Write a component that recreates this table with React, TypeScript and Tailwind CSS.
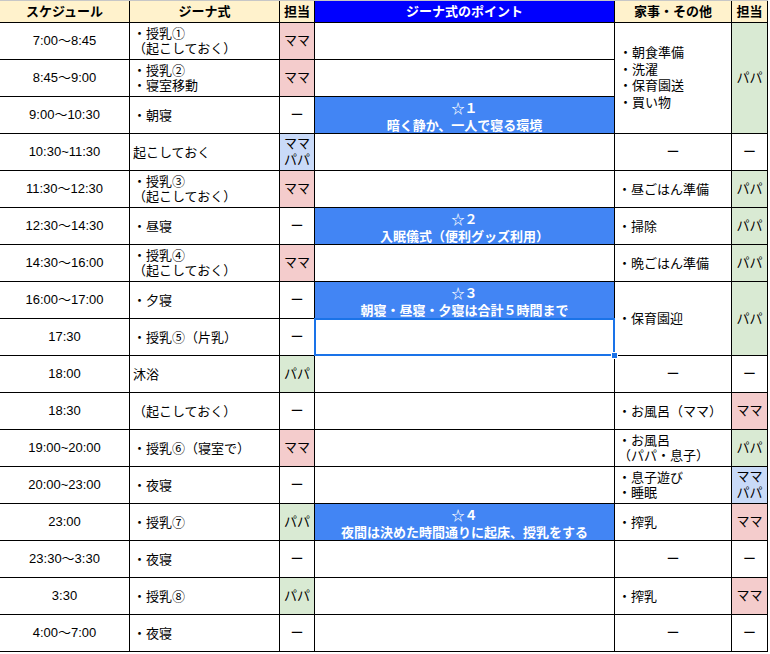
type Tone = "pink" | "green" | "lblue" | "none";

const TONE: Record<Tone, string> = {
  pink: "bg-[#f4cccc]",
  green: "bg-[#d9ead3]",
  lblue: "bg-[#c9daf8]",
  none: "bg-white",
};

function Time({ children }: { children: React.ReactNode }) {
  return <div className="bg-white flex items-center justify-center">{children}</div>;
}

function Text({ children, span }: { children: React.ReactNode; span?: string }) {
  return (
    <div className={`bg-white flex items-center pl-[3px] leading-[15px] ${span ?? ""}`}>
      <div>{children}</div>
    </div>
  );
}

function Who({ tone, children, span }: { tone: Tone; children: React.ReactNode; span?: string }) {
  return (
    <div className={`${TONE[tone]} flex items-center justify-center text-center leading-[16px] ${span ?? ""}`}>
      <div>{children}</div>
    </div>
  );
}

function Point({ star, text }: { star?: string; text?: string }) {
  if (!star) return <div className="bg-white" />;
  return (
    <div className="bg-[#4285f4] text-white font-bold flex flex-col items-center justify-center leading-[17px] pt-[3px]">
      <span>☆{star}</span>
      <span>{text}</span>
    </div>
  );
}

function Dash() {
  return <div className="bg-white flex items-center justify-center">ー</div>;
}

export default function App() {
  return (
    <div className="w-[770px] h-[654px] bg-white text-[13px] text-black font-['Liberation_Sans','Noto_Sans_CJK_JP',sans-serif]">
      <div className="border-t border-[#c7c7c7] w-[768px]">
        <div className="grid grid-cols-[129px_149px_34px_299px_116px_35px] grid-rows-[21px_repeat(17,36px)] gap-px bg-black pr-px pb-px">
          {/* Header */}
          <div className="bg-[#fff2cc] font-bold flex items-center justify-center">スケジュール</div>
          <div className="bg-[#fff2cc] font-bold flex items-center justify-center">ジーナ式</div>
          <div className="bg-[#fff2cc] font-bold flex items-center justify-center">担当</div>
          <div className="bg-[#0000ff] text-white font-bold flex items-center justify-center">ジーナ式のポイント</div>
          <div className="bg-[#fff2cc] font-bold flex items-center justify-center">家事・その他</div>
          <div className="bg-[#fff2cc] font-bold flex items-center justify-center">担当</div>

          {/* 1 */}
          <Time>7:00〜8:45</Time>
          <Text>・授乳①<br />（起こしておく）</Text>
          <Who tone="pink">ママ</Who>
          <Point />
          <div className="bg-white row-span-3 flex items-center pl-[4px] leading-[16.5px]">
            <div>・朝食準備<br />・洗濯<br />・保育園送<br />・買い物</div>
          </div>
          <Who tone="green" span="row-span-3">パパ</Who>

          {/* 2 */}
          <Time>8:45〜9:00</Time>
          <Text>・授乳②<br />・寝室移動</Text>
          <Who tone="pink">ママ</Who>
          <Point />

          {/* 3 */}
          <Time>9:00〜10:30</Time>
          <Text>・朝寝</Text>
          <Dash />
          <Point star="１" text="暗く静か、一人で寝る環境" />

          {/* 4 */}
          <Time>10:30~11:30</Time>
          <Text>起こしておく</Text>
          <Who tone="lblue">ママ<br />パパ</Who>
          <Point />
          <Dash />
          <Dash />

          {/* 5 */}
          <Time>11:30〜12:30</Time>
          <Text>・授乳③<br />（起こしておく）</Text>
          <Who tone="pink">ママ</Who>
          <Point />
          <Text>・昼ごはん準備</Text>
          <Who tone="green">パパ</Who>

          {/* 6 */}
          <Time>12:30〜14:30</Time>
          <Text>・昼寝</Text>
          <Dash />
          <Point star="２" text="入眠儀式（便利グッズ利用）" />
          <Text>・掃除</Text>
          <Who tone="green">パパ</Who>

          {/* 7 */}
          <Time>14:30〜16:00</Time>
          <Text>・授乳④<br />（起こしておく）</Text>
          <Who tone="pink">ママ</Who>
          <Point />
          <Text>・晩ごはん準備</Text>
          <Who tone="green">パパ</Who>

          {/* 8 */}
          <Time>16:00〜17:00</Time>
          <Text>・夕寝</Text>
          <Dash />
          <Point star="３" text="朝寝・昼寝・夕寝は合計５時間まで" />
          <Text span="row-span-2">・保育園迎</Text>
          <Who tone="green" span="row-span-2">パパ</Who>

          {/* 9 */}
          <Time>17:30</Time>
          <Text>・授乳⑤（片乳）</Text>
          <Dash />
          <div className="bg-white relative">
            <div className="absolute -inset-px border-2 border-[#1a73e8] z-10" />
            <div className="absolute -right-[4px] -bottom-[4px] w-[7px] h-[7px] bg-[#1a73e8] border border-white z-20" />
          </div>

          {/* 10 */}
          <Time>18:00</Time>
          <Text>沐浴</Text>
          <Who tone="green">パパ</Who>
          <Point />
          <Dash />
          <Dash />

          {/* 11 */}
          <Time>18:30</Time>
          <Text>（起こしておく）</Text>
          <Dash />
          <Point />
          <Text>・お風呂（ママ）</Text>
          <Who tone="pink">ママ</Who>

          {/* 12 */}
          <Time>19:00~20:00</Time>
          <Text>・授乳⑥（寝室で）</Text>
          <Who tone="pink">ママ</Who>
          <Point />
          <Text>・お風呂<br />（パパ・息子）</Text>
          <Who tone="green">パパ</Who>

          {/* 13 */}
          <Time>20:00~23:00</Time>
          <Text>・夜寝</Text>
          <Dash />
          <Point />
          <Text>・息子遊び<br />・睡眠</Text>
          <Who tone="lblue">ママ<br />パパ</Who>

          {/* 14 */}
          <Time>23:00</Time>
          <Text>・授乳⑦</Text>
          <Who tone="green">パパ</Who>
          <Point star="４" text="夜間は決めた時間通りに起床、授乳をする" />
          <Text>・搾乳</Text>
          <Who tone="pink">ママ</Who>

          {/* 15 */}
          <Time>23:30〜3:30</Time>
          <Text>・夜寝</Text>
          <Dash />
          <Point />
          <Dash />
          <Dash />

          {/* 16 */}
          <Time>3:30</Time>
          <Text>・授乳⑧</Text>
          <Who tone="green">パパ</Who>
          <Point />
          <Text>・搾乳</Text>
          <Who tone="pink">ママ</Who>

          {/* 17 */}
          <Time>4:00〜7:00</Time>
          <Text>・夜寝</Text>
          <Dash />
          <Point />
          <Dash />
          <Dash />
        </div>
      </div>
    </div>
  );
}
